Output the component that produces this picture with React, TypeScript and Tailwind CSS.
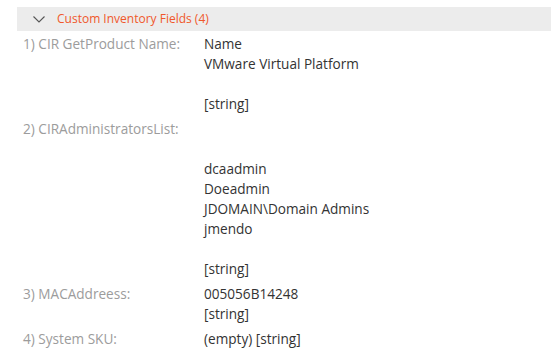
import React from "react";

const rows: { label: string; lines: string[]; }[] = [
  { label: "1) CIR GetProduct Name:", lines: ["Name", "VMware Virtual Platform", "", "[string]"] },
  { label: "2) CIRAdministratorsList:", lines: ["", "", "dcaadmin", "Doeadmin", "JDOMAIN\\Domain Admins", "jmendo", "", "[string]"] },
  { label: "3) MACAddreess:", lines: ["005056B14248", "[string]"] },
  { label: "4) System SKU:", lines: ["(empty) [string]"] },
];

export default function App() {
  return (
    <div className="w-[554px] h-[361px] bg-white overflow-hidden" style={{ fontFamily: '"Open Sans", sans-serif' }}>
      <div className="pt-[7px] pl-[17px] pr-[3px]">
        <div className="h-[24px] bg-[#ececec] flex items-center">
          <svg width="12" height="7" viewBox="0 0 12 7" className="ml-[16px]" fill="none">
            <path d="M0.5 0.5 L6 6 L11.5 0.5" stroke="#555" strokeWidth="1.1" />
          </svg>
          <span className="ml-[12px] text-[12px] text-[#f0582b]">Custom Inventory Fields (4)</span>
        </div>
      </div>
      <div className="pl-[23px] pt-[3px] flex flex-col gap-[5px]">
        {rows.map((r) => (
          <div key={r.label} className="flex text-[13.6px] leading-[20px]">
            <div className="w-[181px] text-[#9c9c9c]">{r.label}</div>
            <div className="text-[#333]">
              {r.lines.map((l, i) => (
                <div key={i} className="h-[20px] whitespace-pre">{l}</div>
              ))}
            </div>
          </div>
        ))}
      </div>
    </div>
  );
}
